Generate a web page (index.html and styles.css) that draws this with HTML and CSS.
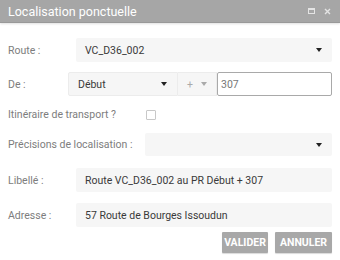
FILE: index.html
```html
<!DOCTYPE html>
<html lang="fr">
<head>
    <meta charset="UTF-8">
    <title>Localisation ponctuelle</title>
    <link rel="stylesheet" href="styles.css">
</head>
<body>
    <div class="dialog">
        <div class="titlebar">
            <span class="title">Localisation ponctuelle</span>
            <span class="tools">
                <svg width="7" height="6" viewBox="0 0 7 6"><rect x="0.5" y="0.5" width="6" height="5" fill="none" stroke="#e4e4e4" stroke-width="1"/><rect x="0.5" y="0.5" width="6" height="1.5" fill="#e4e4e4"/></svg>
                <svg width="7" height="7" viewBox="0 0 7 7"><path d="M1 1 L6 6 M6 1 L1 6" stroke="#e4e4e4" stroke-width="1.4"/></svg>
            </span>
        </div>

        <div class="content">
            <div class="row">
                <label class="lbl lbl-route">Route :</label>
                <div class="field select">
                    <span class="val">VC_D36_002</span>
                    <span class="caret"></span>
                </div>
            </div>

            <div class="row row-de">
                <label class="lbl lbl-de">De :</label>
                <div class="field select bordered sel-debut">
                    <span class="val">Début</span>
                    <span class="caret"></span>
                </div>
                <div class="field select bordered sel-sign">
                    <span class="val muted">+</span>
                    <span class="caret light"></span>
                </div>
                <div class="field input-pr">307</div>
            </div>

            <div class="row row-check">
                <label class="lbl lbl-wide">Itinéraire de transport ?</label>
                <span class="checkbox"></span>
            </div>

            <div class="row row-prec">
                <label class="lbl lbl-wide">Précisions de localisation :</label>
                <div class="field select">
                    <span class="val"></span>
                    <span class="caret"></span>
                </div>
            </div>

            <div class="row row-lib">
                <label class="lbl lbl-route">Libellé :</label>
                <div class="field">Route VC_D36_002 au PR Début + 307</div>
            </div>

            <div class="row row-adr">
                <label class="lbl lbl-route">Adresse :</label>
                <div class="field">57 Route de Bourges Issoudun</div>
            </div>

            <div class="actions">
                <button class="btn btn-valider">VALIDER</button>
                <button class="btn btn-annuler">ANNULER</button>
            </div>
        </div>
    </div>
</body>
</html>
```

FILE: styles.css
```css
body {
    margin: 0;
    font-family: Roboto, "Liberation Sans", sans-serif;
    background-color: #fff;
}

.dialog {
    width: 340px;
    height: 260px;
    background-color: #fff;
}

.titlebar {
    height: 22px;
    background-color: #a6a6a6;
    border-bottom: 1px solid #999;
    display: flex;
    align-items: center;
    justify-content: space-between;
    padding: 0 8px;
    box-shadow: 0 1px 2px rgba(0, 0, 0, 0.12);
}

.title {
    color: #fff;
    font-size: 12.5px;
}

.tools {
    display: flex;
    align-items: center;
    gap: 9px;
    margin-right: 1px;
}

.content {
    padding: 15px 8px 0 8px;
}

.row {
    display: flex;
    align-items: center;
}

.lbl {
    color: #7d7d7d;
    font-size: 10.5px;
    flex-shrink: 0;
}

.lbl-route {
    width: 68px;
}

.lbl-de {
    width: 60px;
}

.lbl-wide {
    width: 137px;
}

.field {
    flex: 1;
    height: 24px;
    box-sizing: border-box;
    background-color: #f6f6f6;
    border-radius: 2px;
    display: flex;
    align-items: center;
    padding: 0 9px;
    color: #3a3a3a;
    font-size: 10.5px;
}

.select {
    justify-content: space-between;
}

.caret {
    width: 0;
    height: 0;
    border-left: 3px solid transparent;
    border-right: 3px solid transparent;
    border-top: 4px solid #222;
    margin-right: 1px;
}

.caret.light {
    border-top-color: #aaa;
}

.bordered {
    border: 1px solid #ececec;
}

.row-de {
    margin-top: 10px;
}

.sel-debut {
    flex: 0 0 110px;
    border-radius: 2px 0 0 2px;
}

.sel-sign {
    flex: 0 0 39px;
    border-left: none;
    border-radius: 0;
    padding: 0 8px 0 9px;
}

.muted {
    color: #aaa;
}

.input-pr {
    background-color: #fff;
    border: 1px solid #a9a9a9;
    color: #777;
    padding: 0 3px;
}

.row-check {
    margin-top: 10px;
    height: 17px;
}

.checkbox {
    width: 10px;
    height: 10px;
    box-sizing: border-box;
    border: 1px solid #c8c8c8;
    border-radius: 1px;
    margin-left: 1px;
}

.row-prec {
    margin-top: 10px;
}

.row-prec .field {
    height: 23px;
}

.row-lib {
    margin-top: 12px;
}

.row-adr {
    margin-top: 11px;
}

.actions {
    display: flex;
    justify-content: flex-end;
    gap: 7px;
    margin-top: 5px;
}

.btn {
    height: 21px;
    border: none;
    border-radius: 1px;
    background-color: #a8a8a8;
    color: #fff;
    font-family: Roboto, "Liberation Sans", sans-serif;
    font-weight: bold;
    font-size: 10.5px;
    padding: 0;
    box-shadow: 0 1px 1px rgba(0, 0, 0, 0.15);
}

.btn-valider {
    width: 46px;
}

.btn-annuler {
    width: 57px;
}
```
